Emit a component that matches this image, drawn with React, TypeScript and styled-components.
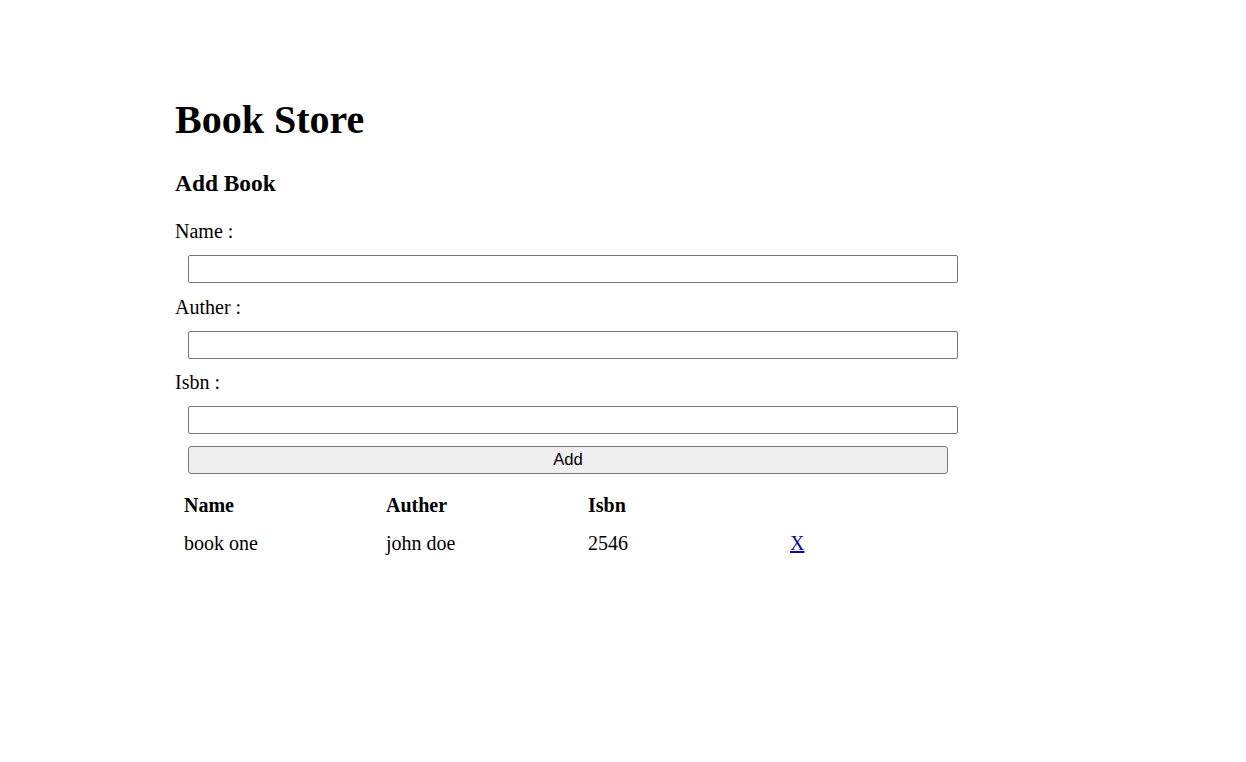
import React from "react";
import styled, { createGlobalStyle } from "styled-components";

const GlobalStyle = createGlobalStyle`
  html, body {
    margin: 0;
    padding: 0;
    background: #ffffff;
  }
  body {
    font-family: "Liberation Serif", "Times New Roman", serif;
    color: #000000;
  }
`;

const Page = styled.div`
  padding: 98px 0 0 175px;
  font-family: "Liberation Serif", "Times New Roman", serif;
`;

const Title = styled.h1`
  margin: 0;
  font-size: 40px;
  font-weight: 700;
  line-height: 44px;
`;

const SubTitle = styled.h3`
  margin: 28px 0 0;
  font-size: 23.4px;
  font-weight: 700;
  line-height: 26px;
`;

const Form = styled.form`
  display: flex;
  flex-direction: column;
  margin-top: 24px;
`;

const Field = styled.div<{ $last?: boolean }>`
  display: flex;
  flex-direction: column;
  margin-bottom: ${(p) => (p.$last ? "12px" : "12.5px")};
`;

const Label = styled.label`
  font-size: 20px;
  line-height: 22px;
  height: 22px;
`;

const Input = styled.input`
  box-sizing: border-box;
  margin: 13px 0 0 13px;
  width: 770px;
  height: 28px;
  border: 1px solid #767676;
  border-radius: 2px;
  background: #ffffff;
  padding: 1px 2px;
  font-size: 16px;
`;

const AddButton = styled.button`
  box-sizing: border-box;
  margin-left: 13px;
  width: 760px;
  height: 28px;
  border: 1px solid #767676;
  border-radius: 3px;
  background: #efefef;
  font-family: "Liberation Sans", Arial, sans-serif;
  font-size: 16.7px;
  color: #000000;
  padding: 0;
`;

const Table = styled.table`
  margin-top: 13px;
  border-collapse: collapse;
  font-size: 20px;
`;

const HeadCell = styled.th`
  box-sizing: border-box;
  width: 202px;
  padding: 7px 9px 9px;
  text-align: left;
  font-weight: 700;
  line-height: 22px;
`;

const Cell = styled.td`
  box-sizing: border-box;
  width: 202px;
  padding: 7px 9px 9px;
  text-align: left;
  line-height: 22px;
`;

const DeleteLink = styled.a`
  color: #0c0c8c;
  text-decoration: underline;
  cursor: pointer;
`;

const books = [{ name: "book one", auther: "john doe", isbn: "2546" }];

export default function App() {
  return (
    <>
      <GlobalStyle />
      <Page>
        <Title>Book Store</Title>
        <SubTitle>Add Book</SubTitle>
        <Form onSubmit={(e) => e.preventDefault()}>
          <Field>
            <Label>Name :</Label>
            <Input type="text" />
          </Field>
          <Field>
            <Label>Auther :</Label>
            <Input type="text" />
          </Field>
          <Field $last>
            <Label>Isbn :</Label>
            <Input type="text" />
          </Field>
          <AddButton type="submit">Add</AddButton>
        </Form>
        <Table>
          <thead>
            <tr>
              <HeadCell>Name</HeadCell>
              <HeadCell>Auther</HeadCell>
              <HeadCell>Isbn</HeadCell>
              <HeadCell></HeadCell>
            </tr>
          </thead>
          <tbody>
            {books.map((b) => (
              <tr key={b.isbn}>
                <Cell>{b.name}</Cell>
                <Cell>{b.auther}</Cell>
                <Cell>{b.isbn}</Cell>
                <Cell>
                  <DeleteLink href="#">X</DeleteLink>
                </Cell>
              </tr>
            ))}
          </tbody>
        </Table>
      </Page>
    </>
  );
}
